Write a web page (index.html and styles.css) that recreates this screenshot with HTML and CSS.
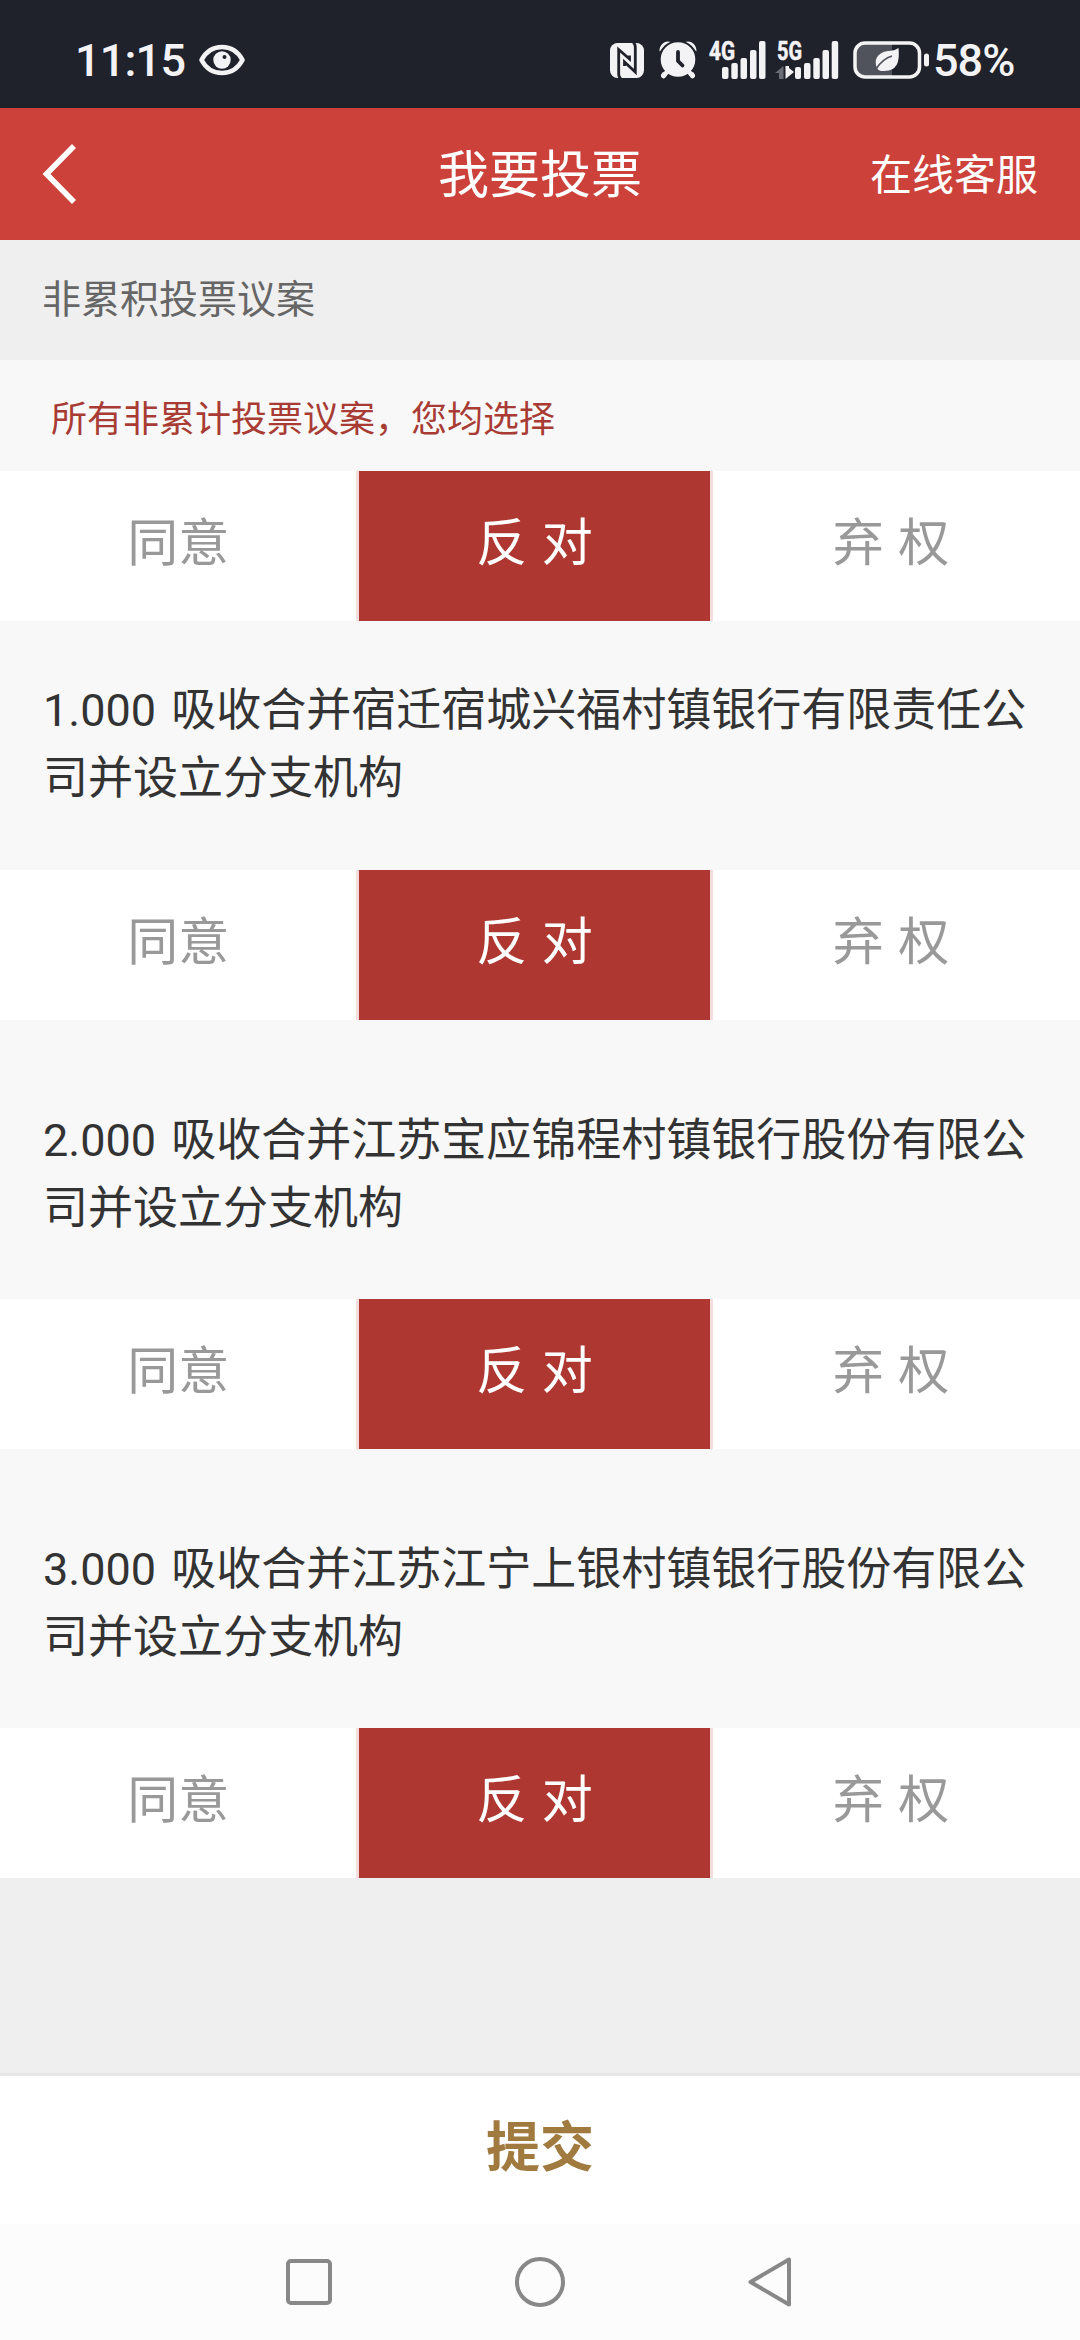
FILE: index.html
```html
<!DOCTYPE html>
<html lang="zh-CN">

<head>
    <meta charset="UTF-8">
    <meta name="viewport" content="width=device-width, initial-scale=1.0">
    <title>我要投票</title>
    <link rel="stylesheet" href="styles.css">
</head>

<body>
    <div class="status-bar">
        <span class="clock">11:15</span>
        <svg class="eye" width="46" height="32" viewBox="0 0 46 32">
            <path d="M2.500 16C7 7.500 14.500 3 23 3s16 4.500 20.500 13C39 24.500 31.500 29 23 29S7 24.500 2.500 16z" fill="none" stroke="#f3f3f5" stroke-width="4.600" stroke-linejoin="round"/>
            <circle cx="23" cy="16" r="8.700" fill="#f3f3f5"/>
            <circle cx="25.500" cy="13" r="2" fill="#1f212b"/>
        </svg>
        <div class="status-icons">
            <svg class="nfc" width="34" height="35" viewBox="0 0 34 35">
                <rect width="34" height="35" rx="7.500" fill="#f3f3f5"/>
                <path d="M11 35.500C9 34.500 8.700 33 8.700 31V6.500L19.500 16v-3.500M23 -.5C25 .5 25.300 2 25.300 4v25L14.500 19v4" fill="none" stroke="#1f212b" stroke-width="2.800"/>
            </svg>
            <svg class="alarm" width="38" height="38" viewBox="0 0 38 38">
                <path d="M7 31L4.500 34.500M31 31l2.500 3.500" stroke="#f3f3f5" stroke-width="5" stroke-linecap="round"/>
                <path d="M.5 10.500C0 4 6 -1.500 12 1zM37.500 10.500C38 4 32 -1.500 26 1z" fill="#f3f3f5"/>
                <circle cx="19" cy="18.500" r="18.300" fill="#f3f3f5" stroke="#1f212b" stroke-width="2"/>
                <path d="M7.500 31.500L4.500 35M30.500 31.500l3 3.500" stroke="#f3f3f5" stroke-width="4.500" stroke-linecap="round"/>
                <path d="M19 11V20l4.500 4.500" fill="none" stroke="#1f212b" stroke-width="3.800" stroke-linecap="round" stroke-linejoin="round"/>
            </svg>
            <svg class="signal" width="57" height="38" viewBox="0 0 57 38">
                <text class="network" x="0" y="18.800" textLength="26" lengthAdjust="spacingAndGlyphs">4G</text>
                <g fill="#f3f3f5">
                    <rect x="13" y="26" width="6.500" height="12" rx="2"/>
                    <rect x="22.300" y="22" width="6.500" height="16" rx="2"/>
                    <rect x="31.500" y="17" width="6.500" height="21" rx="2"/>
                    <rect x="41" y="9" width="6.500" height="29" rx="2"/>
                    <rect x="50" y="0" width="6.500" height="38" rx="2"/>
                </g>
            </svg>
            <svg class="signal-data" width="64" height="38" viewBox="0 0 64 38">
                <text class="network" x="2" y="18.800" textLength="25" lengthAdjust="spacingAndGlyphs">5G</text>
                <path d="M8.500 25v13H4v-6H0z" fill="#6b6d75"/>
                <path d="M10.500 38V25H14v2l5 4z" fill="#f3f3f5"/>
                <g fill="#f3f3f5">
                    <rect x="20" y="26" width="6" height="12" rx="2"/>
                    <rect x="29" y="22" width="6.500" height="16" rx="2"/>
                    <rect x="38.300" y="17" width="6.500" height="21" rx="2"/>
                    <rect x="47.500" y="9" width="6.500" height="29" rx="2"/>
                    <rect x="56.700" y="0" width="6.500" height="38" rx="2"/>
                </g>
            </svg>
            <svg class="battery" width="76" height="38" viewBox="0 0 76 38">
                <path d="M12 2h27v34H12A10 10 0 0 1 2 26V12A10 10 0 0 1 12 2z" fill="#50535b"/>
                <rect x="2" y="2" width="64.500" height="34" rx="10" fill="none" stroke="#f3f3f5" stroke-width="3.500"/>
                <rect x="71" y="12.500" width="5" height="13" rx="2.500" fill="#f3f3f5"/>
                <path d="M45.500 7C46.500 18 46 30 31 30c-2 0-4 0-5.500-1l-1.500-2C19 14 31 10 36 10c5-.5 7-1.500 9.500-3z" fill="#f3f3f5"/>
                <path d="M23 28c4-6 9-11 16-13" fill="none" stroke="#50535b" stroke-width="1.600"/>
            </svg>
            <span class="battery-text">58%</span>
        </div>
    </div>

    <header>
        <svg class="back" width="36" height="62" viewBox="0 0 36 62">
            <path d="M32 3L4.500 31 32 59" fill="none" stroke="#fff" stroke-width="5.600"/>
        </svg>
        <h1>我要投票</h1>
        <span class="service">在线客服</span>
    </header>

    <main>
        <div class="section-title">非累积投票议案</div>
        <div class="select-all">所有非累计投票议案，您均选择</div>
        <div class="options">
            <div class="option">同意</div>
            <div class="option selected">反 对</div>
            <div class="option">弃 权</div>
        </div>

        <div class="proposal first">1.000 吸收合并宿迁宿城兴福村镇银行有限责任公司并设立分支机构</div>
        <div class="options">
            <div class="option">同意</div>
            <div class="option selected">反 对</div>
            <div class="option">弃 权</div>
        </div>

        <div class="proposal">2.000 吸收合并江苏宝应锦程村镇银行股份有限公司并设立分支机构</div>
        <div class="options">
            <div class="option">同意</div>
            <div class="option selected">反 对</div>
            <div class="option">弃 权</div>
        </div>

        <div class="proposal">3.000 吸收合并江苏江宁上银村镇银行股份有限公司并设立分支机构</div>
        <div class="options">
            <div class="option">同意</div>
            <div class="option selected">反 对</div>
            <div class="option">弃 权</div>
        </div>
    </main>

    <div class="submit">提交</div>

    <nav>
        <svg width="50" height="54" viewBox="0 0 50 54">
            <rect x="4" y="6" width="42" height="42" rx="3" fill="none" stroke="#888" stroke-width="4"/>
        </svg>
        <svg width="54" height="54" viewBox="0 0 54 54">
            <circle cx="27" cy="27" r="23" fill="none" stroke="#888" stroke-width="4"/>
        </svg>
        <svg width="50" height="54" viewBox="0 0 50 54">
            <path d="M43 4.500v45L4.500 27z" fill="none" stroke="#888" stroke-width="4" stroke-linejoin="round"/>
        </svg>
    </nav>
</body>

</html>
```
FILE: styles.css
```css
* {
    box-sizing: border-box;
}

body {
    font-family: 'Noto Sans CJK SC', sans-serif;
    margin: 0;
    display: flex;
    flex-direction: column;
    height: 2340px;
    background-color: #efefef;
}

svg {
    display: block;
    flex: none;
    overflow: visible;
}

.status-bar {
    height: 108px;
    padding: 12px 65px 0 75px;
    display: flex;
    align-items: center;
    background-color: #1f212b;
    color: #f3f3f5;
    font-family: Roboto, sans-serif;
    font-size: 45px;
    font-weight: 500;
    white-space: nowrap;
}

.clock {
    width: 124px;
    letter-spacing: -0.8px;
}

.status-icons {
    display: flex;
    align-items: center;
    margin-left: auto;
}

.alarm {
    margin-left: 15px;
}

.signal {
    margin-left: 12px;
}

.signal-data {
    margin-left: 9px;
}

.battery {
    margin-left: 14px;
}

.battery-text {
    width: 82px;
    margin-left: 4px;
    letter-spacing: -1px;
}

.network {
    font-family: Roboto, sans-serif;
    font-size: 26px;
    font-weight: 700;
    fill: #f3f3f5;
    stroke: #f3f3f5;
    stroke-width: 0.6px;
}

header {
    height: 132px;
    padding: 0 42px 6px;
    display: grid;
    grid-template-columns: 1fr auto 1fr;
    align-items: center;
    background-color: #cd413b;
    color: #fff;
}

header h1 {
    margin: 0;
    font-size: 51px;
    font-weight: 400;
    line-height: 76px;
}

.back {
    margin-top: 6px;
}

.service {
    font-size: 42px;
    text-align: right;
}

main {
    flex: 1;
}

.section-title {
    height: 120px;
    padding-left: 42px;
    font-size: 39px;
    line-height: 112px;
    color: #666;
}

.select-all {
    height: 111px;
    padding-left: 51px;
    font-size: 36px;
    line-height: 112px;
    background-color: #f8f8f8;
    color: #a83c34;
}

.options {
    display: flex;
    height: 150px;
    background-color: #fff;
}

.option {
    width: 33%;
    font-size: 51px;
    line-height: 137px;
    text-align: center;
    word-spacing: 3px;
    color: #999;
}

.selected {
    border: solid #f3dedd;
    border-width: 0 3px;
    background-color: #ae3831;
    color: #fff;
}

.proposal {
    height: 279px;
    padding: 87px 40px 0 43px;
    font-family: Roboto, 'Noto Sans CJK SC', sans-serif;
    font-size: 45px;
    line-height: 68px;
    word-spacing: 4px;
    background-color: #f8f8f8;
    color: #333;
}

.first {
    height: 249px;
    padding-top: 56px;
}

.submit {
    height: 151px;
    border-top: 3px solid #e6e6e6;
    background-color: #fff;
    color: #a07a3e;
    font-size: 54px;
    font-weight: 700;
    line-height: 135px;
    text-align: center;
}

nav {
    height: 116px;
    display: flex;
    justify-content: center;
    align-items: center;
    gap: 179px;
    background-color: #fcfcfc;
}
```
